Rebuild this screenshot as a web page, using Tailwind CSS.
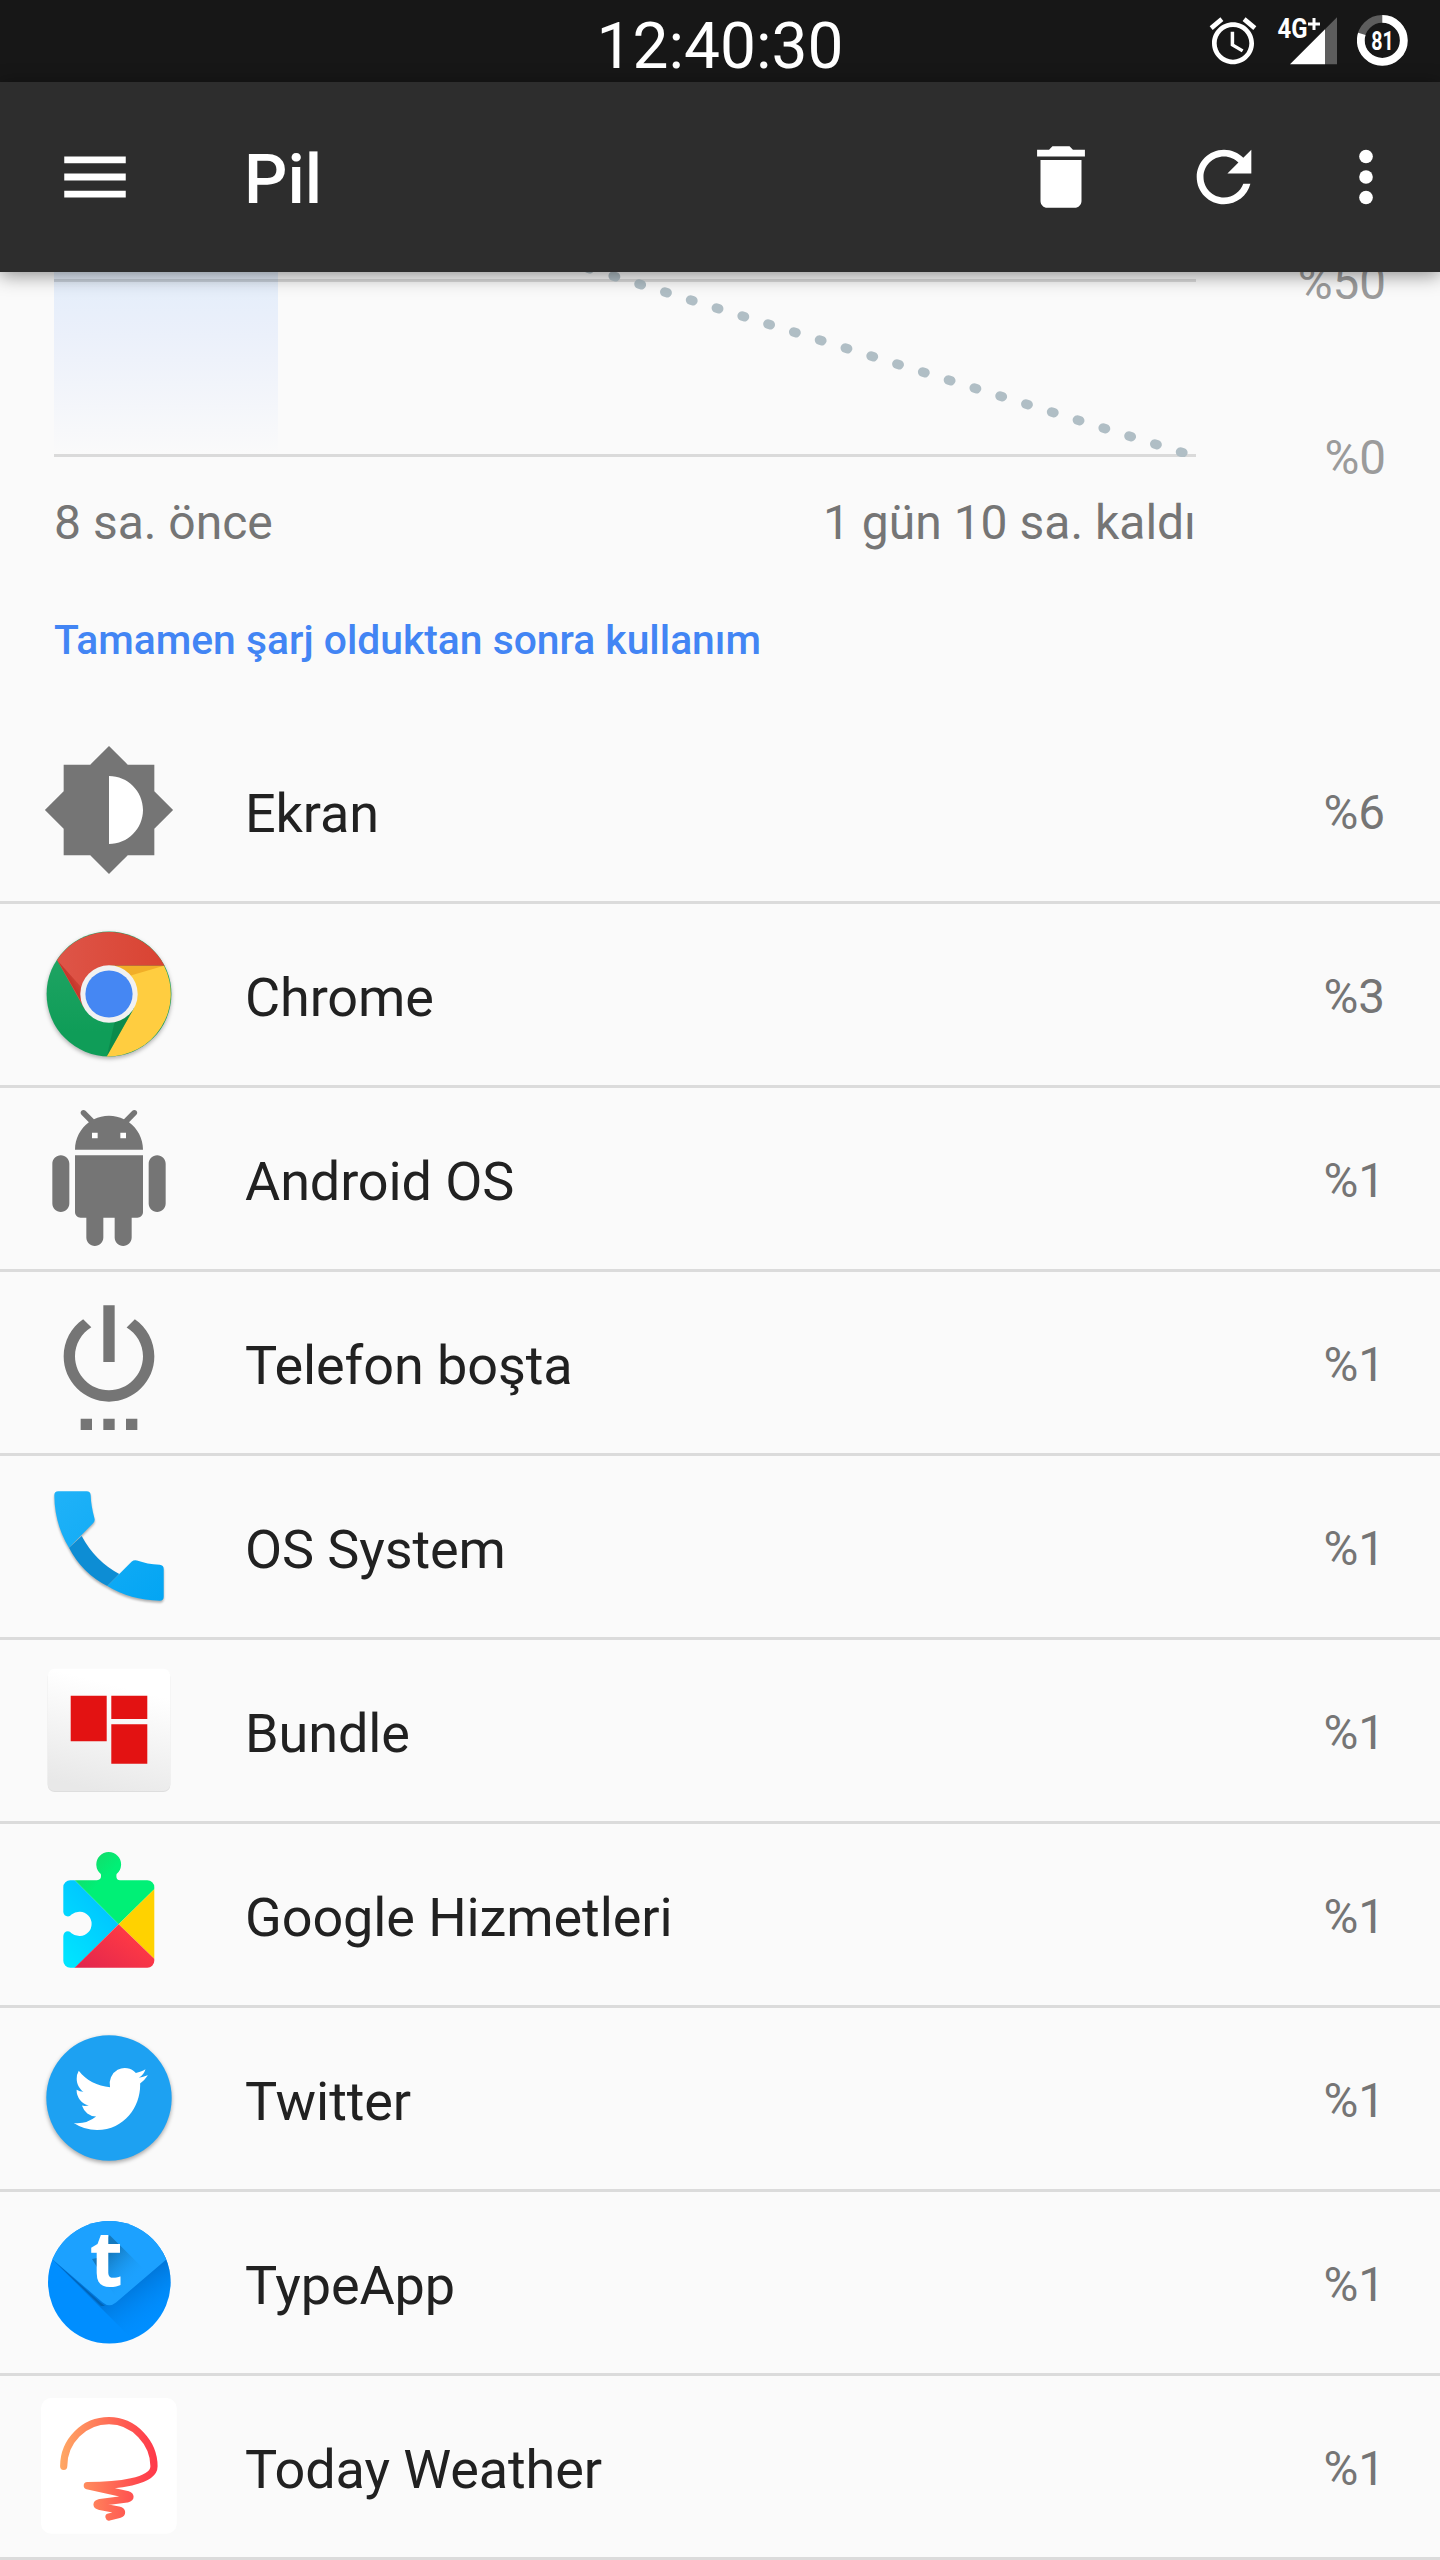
<!DOCTYPE html>
<html lang="tr">

<head>
    <meta charset="UTF-8" />
    <meta name="viewport" content="width=device-width, initial-scale=1.0" />
    <title>Pil</title>
    <script src="https://cdn.jsdelivr.net/npm/@tailwindcss/browser@4"></script>
    <style>
        body {
            font-family: Roboto, 'Noto Sans', sans-serif;
        }
    </style>
</head>

<body class="w-[1440px] h-[2560px] overflow-hidden bg-[#fafafa] text-[#212121]">

    <!-- Status bar -->
    <div class="relative h-[82px] bg-[#171717] text-white flex items-center justify-end pr-[32px]">
        <span class="absolute left-0 w-full text-center top-[9px] text-[64px] leading-[75px]">12:40:30</span>
        <svg class="w-[56px] h-[56px] mr-[16px]" viewBox="0 0 24 24" fill="#fff">
            <path d="M22 5.72l-4.6-3.86-1.29 1.53 4.6 3.86L22 5.72zM7.88 3.39L6.6 1.86 2 5.71l1.29 1.53 4.59-3.85zM12.5 8H11v6l4.75 2.85.75-1.23-4-2.37V8zM12 4c-4.97 0-9 4.03-9 9s4.02 9 9 9c4.97 0 9-4.03 9-9s-4.03-9-9-9zm0 16c-3.87 0-7-3.13-7-7s3.13-7 7-7 7 3.13 7 7-3.13 7-7 7z" />
        </svg>
        <svg class="w-[60px] h-[82px] mr-[20px]" viewBox="0 0 60 82">
            <path d="M60 17.3V64.3H48V29.3z" fill="#5d5d5d" />
            <path d="M13 64.3H48V29.3z" fill="#fff" />
            <text x="0.5" y="38.3" font-size="28" font-weight="700" fill="#fff" textLength="30" lengthAdjust="spacingAndGlyphs">4G</text>
            <path d="M31 24H43M37 18V30" stroke="#fff" stroke-width="3" />
        </svg>
        <svg class="w-[51px] h-[82px]" viewBox="0 0 51 82">
            <circle cx="25.3" cy="40.4" r="21.5" fill="none" stroke="#5d5d5d" stroke-width="7.8" />
            <circle cx="25.3" cy="40.4" r="21.5" fill="none" stroke="#fff" stroke-width="7.8" pathLength="100" stroke-dasharray="80 20" transform="rotate(-90 25.3 40.4)" />
            <text x="14.3" y="50" font-size="25" font-weight="700" fill="#fff" textLength="22.5" lengthAdjust="spacingAndGlyphs">81</text>
        </svg>
    </div>

    <!-- App bar -->
    <header class="relative z-10 h-[190px] bg-[#2d2d2d] text-white flex items-center pl-[54px] shadow-[0_3px_18px_rgba(0,0,0,0.45)]">
        <svg class="w-[82px] h-[82px]" viewBox="0 0 24 24" fill="#fff">
            <path d="M3 18h18v-2H3v2zm0-5h18v-2H3v2zm0-7v2h18V6H3z" />
        </svg>
        <h1 class="ml-[108px] flex-1 text-[68px] font-medium leading-[80px] pt-1.5">Pil</h1>
        <svg class="w-[82px] h-[82px] mr-[81px]" viewBox="0 0 24 24" fill="#fff">
            <path d="M6 19c0 1.1.9 2 2 2h8c1.1 0 2-.9 2-2V7H6v12zM19 4h-3.5l-1-1h-5l-1 1H5v2h14V4z" />
        </svg>
        <svg class="w-[82px] h-[82px] mr-[60px]" viewBox="0 0 24 24" fill="#fff">
            <path d="M17.65 6.35C16.2 4.9 14.21 4 12 4c-4.42 0-7.99 3.58-7.99 8s3.57 8 7.99 8c3.73 0 6.84-2.55 7.73-6h-2.08c-.82 2.33-3.04 4-5.65 4-3.31 0-6-2.69-6-6s2.69-6 6-6c1.66 0 3.14.69 4.22 1.78L13 11h7V4l-2.35 2.35z" />
        </svg>
        <svg class="w-[82px] h-[82px] mr-[33px]" viewBox="0 0 24 24" fill="#fff">
            <circle cx="12" cy="6" r="2" />
            <circle cx="12" cy="12" r="2" />
            <circle cx="12" cy="18" r="2" />
        </svg>
    </header>

    <!-- Battery chart -->
    <section class="h-[448px] px-[54px] text-[48px] text-[#757575]">
        <div class="flex h-[185px]">
            <svg class="w-[1142px] h-[185px] shrink-0" viewBox="54 272 1142 185">
                <defs>
                    <linearGradient id="usage" x1="0" y1="0" x2="0" y2="1">
                        <stop offset="0" stop-color="#e3edfa" />
                        <stop offset="0.35" stop-color="#ebf0fa" />
                        <stop offset="1" stop-color="#fafafa" />
                    </linearGradient>
                </defs>
                <rect x="54" y="272" width="224" height="182" fill="url(#usage)" />
                <path d="M54 279h1142v3H54zM54 454h1142v3H54z" fill="#000" fill-opacity="0.125" />
                <path d="M1182.9 452.7L588 268.2" stroke="#b0bec5" stroke-width="9.4" stroke-linecap="round" stroke-dasharray="2.5 24.5" fill="none" />
            </svg>
            <div class="flex-1 flex flex-col items-end text-[47.6px] text-[#9b9b9b] leading-[56px]">
                <span class="-mt-[17px]">%50</span>
                <span class="mt-[119px]">%0</span>
            </div>
        </div>
        <div class="flex justify-between w-[1142px] mt-[38px] leading-[56px]">
            <span>8 sa. önce</span>
            <span>1 gün 10 sa. kaldı</span>
        </div>
        <h2 class="mt-[65px] text-[40.8px] leading-[48px] font-medium text-[#4285f4]">Tamamen şarj olduktan sonra kullanım</h2>
    </section>

    <!-- Usage list -->
    <ul class="text-[54px] tracking-[-0.1px]">
        <li class="h-[184px] border-b-[3px] border-[#dbdbdb] flex items-center pl-[41px] pr-[55px]">
            <svg class="w-[136px] h-[136px] mb-px" viewBox="0 0 24 24" fill="#757575">
                <path d="M12 5.9a6.1 6.1 0 0 1 0 12.2z" fill="#fff" />
                <path d="M20 15.31L23.31 12 20 8.69V4h-4.69L12 .69 8.69 4H4v4.69L.69 12 4 15.31V20h4.69L12 23.31 15.31 20H20v-4.69zM12 18V6c3.31 0 6 2.69 6 6s-2.69 6-6 6z" />
            </svg>
            <span class="ml-[68px] flex-1 pt-1.5">Ekran</span>
            <span class="text-[47.6px] text-[#757575] pt-1.5">%6</span>
        </li>
        <li class="h-[184px] border-b-[3px] border-[#dbdbdb] flex items-center pl-[41px] pr-[55px]">
            <svg class="w-[136px] h-[136px] mb-px drop-shadow-[0_2px_2px_rgba(0,0,0,0.3)]" viewBox="0 0 136 136">
                <defs>
                    <linearGradient id="chromeRed" x1="0" y1="0" x2="1" y2="0">
                        <stop offset="0" stop-color="#de5548" />
                        <stop offset="1" stop-color="#d94332" />
                    </linearGradient>
                    <linearGradient id="chromeGreen" x1="0" y1="0" x2="0" y2="1">
                        <stop offset="0.2" stop-color="#1fa463" />
                        <stop offset="0.8" stop-color="#0f9d58" />
                    </linearGradient>
                    <linearGradient id="redFold" gradientUnits="userSpaceOnUse" x1="30" y1="65" x2="42" y2="58">
                        <stop offset="0" stop-color="#b7271c" stop-opacity="0.85" />
                        <stop offset="1" stop-color="#b7271c" stop-opacity="0.2" />
                    </linearGradient>
                </defs>
                <circle cx="68" cy="68" r="62.4" fill="url(#chromeGreen)" />
                <path d="M123 39.7A62.4 62.4 0 0 1 65.7 130.4L93 82 68 68V39.7z" fill="#ffcd40" />
                <path d="M16 34A62.4 62.4 0 0 1 123.6 39.7H68V68L43 82z" fill="url(#chromeRed)" />
                <path d="M16.7 34.7L41 77V62z" fill="url(#redFold)" />
                <path d="M70 39.7H123L88 50z" fill="#ea9d1c" fill-opacity="0.65" />
                <path d="M92 84L66 130 74 94z" fill="#0a7c42" fill-opacity="0.55" />
                <circle cx="68" cy="68" r="28.7" fill="#f1f1f1" />
                <circle cx="68" cy="68" r="23.6" fill="#4587f3" />
            </svg>
            <span class="ml-[68px] flex-1 pt-1.5">Chrome</span>
            <span class="text-[47.6px] text-[#757575] pt-1.5">%3</span>
        </li>
        <li class="h-[184px] border-b-[3px] border-[#dbdbdb] flex items-center pl-[41px] pr-[55px]">
            <svg class="w-[136px] h-[136px] mb-px" viewBox="0 0 24 24" fill="#757575">
                <path d="M9 4h1v1H9zM14 4h1v1h-1z" fill="#fff" />
                <path d="M6 18c0 .55.45 1 1 1h1v3.5c0 .83.67 1.5 1.5 1.5s1.5-.67 1.5-1.5V19h2v3.5c0 .83.67 1.5 1.5 1.5s1.5-.67 1.5-1.5V19h1c.55 0 1-.45 1-1V8H6v10zM3.5 8C2.67 8 2 8.67 2 9.5v7c0 .83.67 1.5 1.5 1.5S5 17.33 5 16.5v-7C5 8.67 4.33 8 3.5 8zm17 0c-.83 0-1.5.67-1.5 1.5v7c0 .83.67 1.5 1.5 1.5s1.5-.67 1.5-1.5v-7c0-.83-.67-1.5-1.5-1.5zm-4.97-5.84l1.3-1.3c.2-.2.2-.51 0-.71-.2-.2-.51-.2-.71 0l-1.48 1.48C13.85 1.23 12.95 1 12 1c-.96 0-1.86.23-2.66.63L7.85.15c-.2-.2-.51-.2-.71 0-.2.2-.2.51 0 .71l1.31 1.31C6.97 3.26 6 5.01 6 7h12c0-1.99-.97-3.75-2.47-4.84zM10 5H9V4h1v1zm5 0h-1V4h1v1z" />
            </svg>
            <span class="ml-[68px] flex-1 pt-1.5">Android OS</span>
            <span class="text-[47.6px] text-[#757575] pt-1.5">%1</span>
        </li>
        <li class="h-[184px] border-b-[3px] border-[#dbdbdb] flex items-center pl-[41px] pr-[55px]">
            <svg class="w-[136px] h-[136px] mb-px" viewBox="0 0 24 24" fill="#757575">
                <path d="M7 24h2v-2H7v2zm4 0h2v-2h-2v2zm2-22h-2v10h2V2zm3.56 2.44l-1.45 1.45C16.84 6.94 18 8.83 18 11c0 3.31-2.69 6-6 6s-6-2.69-6-6c0-2.17 1.16-4.06 2.88-5.12L7.44 4.44C5.36 5.88 4 8.28 4 11c0 4.42 3.58 8 8 8s8-3.58 8-8c0-2.72-1.36-5.12-3.44-6.56zM15 24h2v-2h-2v2z" />
            </svg>
            <span class="ml-[68px] flex-1 pt-1.5">Telefon boşta</span>
            <span class="text-[47.6px] text-[#757575] pt-1.5">%1</span>
        </li>
        <li class="h-[184px] border-b-[3px] border-[#dbdbdb] flex items-center pl-[41px] pr-[55px]">
            <svg class="w-[136px] h-[136px] mb-px drop-shadow-[0_2px_1px_rgba(0,0,0,0.3)]" viewBox="0 0 136 136">
                <defs>
                    <linearGradient id="phone" gradientUnits="userSpaceOnUse" x1="13" y1="13" x2="123" y2="123">
                        <stop offset="0" stop-color="#20b2f8" />
                        <stop offset="1" stop-color="#03a5f3" />
                    </linearGradient>
                </defs>
                <path d="M28 69.7L40.7 58Q54 83 78.3 96L66.3 108Q41 95 28 69.7z" fill="#0d8dd4" />
                <path d="M17.3 13.3H45.7Q49.5 13.3 49.7 17.3Q50 28 53.5 40.5Q54.2 43 52.3 45L28 69.7Q13.5 46 13.3 17.3Q13.3 13.3 17.3 13.3z" fill="url(#phone)" />
                <path d="M66.3 108L90.8 83.6Q93 81.5 96 82.4Q106 86 118.7 86.7Q122.7 87 122.7 91V118.7Q122.7 122.7 118.7 122.7Q89 122 66.3 108z" fill="url(#phone)" />
            </svg>
            <span class="ml-[68px] flex-1 pt-1.5">OS System</span>
            <span class="text-[47.6px] text-[#757575] pt-1.5">%1</span>
        </li>
        <li class="h-[184px] border-b-[3px] border-[#dbdbdb] flex items-center pl-[41px] pr-[55px]">
            <svg class="w-[136px] h-[136px] mb-px" viewBox="0 0 136 136">
                <defs>
                    <linearGradient id="bundle" x1="0.65" y1="0" x2="0.4" y2="1">
                        <stop offset="0.15" stop-color="#fff" />
                        <stop offset="1" stop-color="#e8e8e8" />
                    </linearGradient>
                </defs>
                <rect x="6.7" y="7.7" width="122.6" height="122.3" rx="7" fill="#dedede" />
                <rect x="6.7" y="6.7" width="122.6" height="122.3" rx="7" fill="url(#bundle)" />
                <path d="M29.7 33.7h36v45.6h-36zM70.3 33.7h36V57h-36zM70.3 62.3h36v39.4h-36z" fill="#e31212" />
            </svg>
            <span class="ml-[68px] flex-1 pt-1.5">Bundle</span>
            <span class="text-[47.6px] text-[#757575] pt-1.5">%1</span>
        </li>
        <li class="h-[184px] border-b-[3px] border-[#dbdbdb] flex items-center pl-[41px] pr-[55px]">
            <svg class="w-[136px] h-[136px] mb-px" viewBox="0 0 136 136">
                <defs>
                    <clipPath id="puzzle">
                        <path d="M29.3 34.3H56Q61 34 59.8 28A12.4 12.4 0 1 1 75.6 28Q74.5 34 79 34.3H106.3A7 7 0 0 1 113.3 41.3V114.7A7 7 0 0 1 106.3 121.7H29.3A7 7 0 0 1 22.3 114.7V90Q22.8 85.5 27 85.3Q29 85.3 30.5 87.2A12.2 12.2 0 1 0 30.5 68.6Q29 70.5 27 70.5Q22.8 70 22.3 66V41.3A7 7 0 0 1 29.3 34.3z" />
                    </clipPath>
                    <linearGradient id="playBlue" x1="0.8" y1="0" x2="0.2" y2="1">
                        <stop offset="0.1" stop-color="#00bdff" />
                        <stop offset="1" stop-color="#00e5ff" />
                    </linearGradient>
                    <linearGradient id="playGreen" gradientUnits="userSpaceOnUse" x1="56" y1="8" x2="72" y2="24">
                        <stop offset="0" stop-color="#12dd6c" />
                        <stop offset="1" stop-color="#00f076" />
                    </linearGradient>
                    <linearGradient id="playRed" x1="0" y1="0.9" x2="0.8" y2="0.3">
                        <stop offset="0" stop-color="#e2264e" />
                        <stop offset="1" stop-color="#ff3a44" />
                    </linearGradient>
                </defs>
                <g clip-path="url(#puzzle)">
                    <path d="M20 20L33.8 34.3 77.7 78.3 33.7 122H20z" fill="url(#playBlue)" />
                    <path d="M33.8 34.3L40 0H114V42.6L77.7 78.3z" fill="url(#playGreen)" />
                    <path d="M114 42.6V113.4L77.7 78.3z" fill="#ffd200" />
                    <path d="M33.4 122L77.7 78.3 114 113.4V122z" fill="url(#playRed)" />
                </g>
            </svg>
            <span class="ml-[68px] flex-1 pt-1.5">Google Hizmetleri</span>
            <span class="text-[47.6px] text-[#757575] pt-1.5">%1</span>
        </li>
        <li class="h-[184px] border-b-[3px] border-[#dbdbdb] flex items-center pl-[41px] pr-[55px]">
            <svg class="w-[136px] h-[136px] mb-px drop-shadow-[0_2px_2px_rgba(0,0,0,0.35)]" viewBox="0 0 136 136">
                <circle cx="68" cy="68" r="62.7" fill="#1da1f2" />
                <path transform="translate(32.7 30.8) scale(3.083 3.18)" fill="#fff" d="M23.953 4.57a10 10 0 01-2.825.775 4.958 4.958 0 002.163-2.723c-.951.555-2.005.959-3.127 1.184a4.92 4.92 0 00-8.384 4.482C7.69 8.095 4.067 6.13 1.64 3.162a4.822 4.822 0 00-.666 2.475c0 1.71.87 3.213 2.188 4.096a4.904 4.904 0 01-2.228-.616v.06a4.923 4.923 0 003.946 4.827 4.996 4.996 0 01-2.212.085 4.936 4.936 0 004.604 3.417 9.867 9.867 0 01-6.102 2.105c-.39 0-.779-.023-1.17-.067a13.995 13.995 0 007.557 2.209c9.053 0 13.998-7.496 13.998-13.985 0-.21 0-.42-.015-.63A9.935 9.935 0 0024 4.59z" />
            </svg>
            <span class="ml-[68px] flex-1 pt-1.5">Twitter</span>
            <span class="text-[47.6px] text-[#757575] pt-1.5">%1</span>
        </li>
        <li class="h-[184px] border-b-[3px] border-[#dbdbdb] flex items-center pl-[41px] pr-[55px]">
            <svg class="w-[136px] h-[136px] mb-px" viewBox="0 0 136 136">
                <defs>
                    <clipPath id="typeRound">
                        <circle cx="68.3" cy="68.3" r="61.3" />
                    </clipPath>
                    <linearGradient id="typeShade" gradientUnits="userSpaceOnUse" x1="85" y1="75" x2="110" y2="112">
                        <stop offset="0" stop-color="#0074d6" stop-opacity="0.85" />
                        <stop offset="1" stop-color="#008eff" stop-opacity="0" />
                    </linearGradient>
                    <linearGradient id="letterShade" gradientUnits="userSpaceOnUse" x1="68" y1="40" x2="94" y2="66">
                        <stop offset="0" stop-color="#126fae" stop-opacity="0.8" />
                        <stop offset="1" stop-color="#1ca1ff" stop-opacity="0" />
                    </linearGradient>
                </defs>
                <g clip-path="url(#typeRound)">
                    <rect width="136" height="136" fill="#008eff" />
                    <path d="M12 46L92 126 136 130V36z" fill="url(#typeShade)" />
                    <path d="M12 46L60 89 64 92 60 92z" fill="#005fae" fill-opacity="0.8" />
                    <path d="M0 0H136V36L124.7 46 75 88.5Q68.3 94 61.7 88.5L12.3 46 0 36z" fill="#1ca1ff" />
                    <path d="M68.5 21L109 61 77 87 51 45 56 44z" fill="url(#letterShade)" />
                    <text x="48.5" y="71.5" font-family="Open Sans" font-size="77" font-weight="700" fill="#fff">t</text>
                </g>
            </svg>
            <span class="ml-[68px] flex-1 pt-1.5">TypeApp</span>
            <span class="text-[47.6px] text-[#757575] pt-1.5">%1</span>
        </li>
        <li class="h-[184px] border-b-[3px] border-[#dbdbdb] flex items-center pl-[41px] pr-[55px]">
            <svg class="w-[136px] h-[136px] mb-px" viewBox="0 0 136 136">
                <defs>
                    <linearGradient id="sunset" gradientUnits="userSpaceOnUse" x1="20" y1="0" x2="115" y2="0">
                        <stop offset="0" stop-color="#ffa764" />
                        <stop offset="0.9" stop-color="#ff414c" />
                        <stop offset="1" stop-color="#ff3a4a" />
                    </linearGradient>
                </defs>
                <rect width="135.7" height="135.7" rx="10" fill="#fff" />
                <path d="M22.7 68.3C22.7 43 43 22.7 68 22.7C93 22.7 113 45 113 68.3C113 84 75 87.7 46.3 87.7L86 96.5C90 97.8 90 100 86 101L59 104.5C55 105.5 55 107.5 59 108.5L77.5 112C81.5 113 81.5 115.5 78 116.5L68 119" fill="none" stroke="url(#sunset)" stroke-width="7.2" stroke-linecap="round" stroke-linejoin="round" />
            </svg>
            <span class="ml-[68px] flex-1 pt-1.5">Today Weather</span>
            <span class="text-[47.6px] text-[#757575] pt-1.5">%1</span>
        </li>
    </ul>
</body>

</html>
